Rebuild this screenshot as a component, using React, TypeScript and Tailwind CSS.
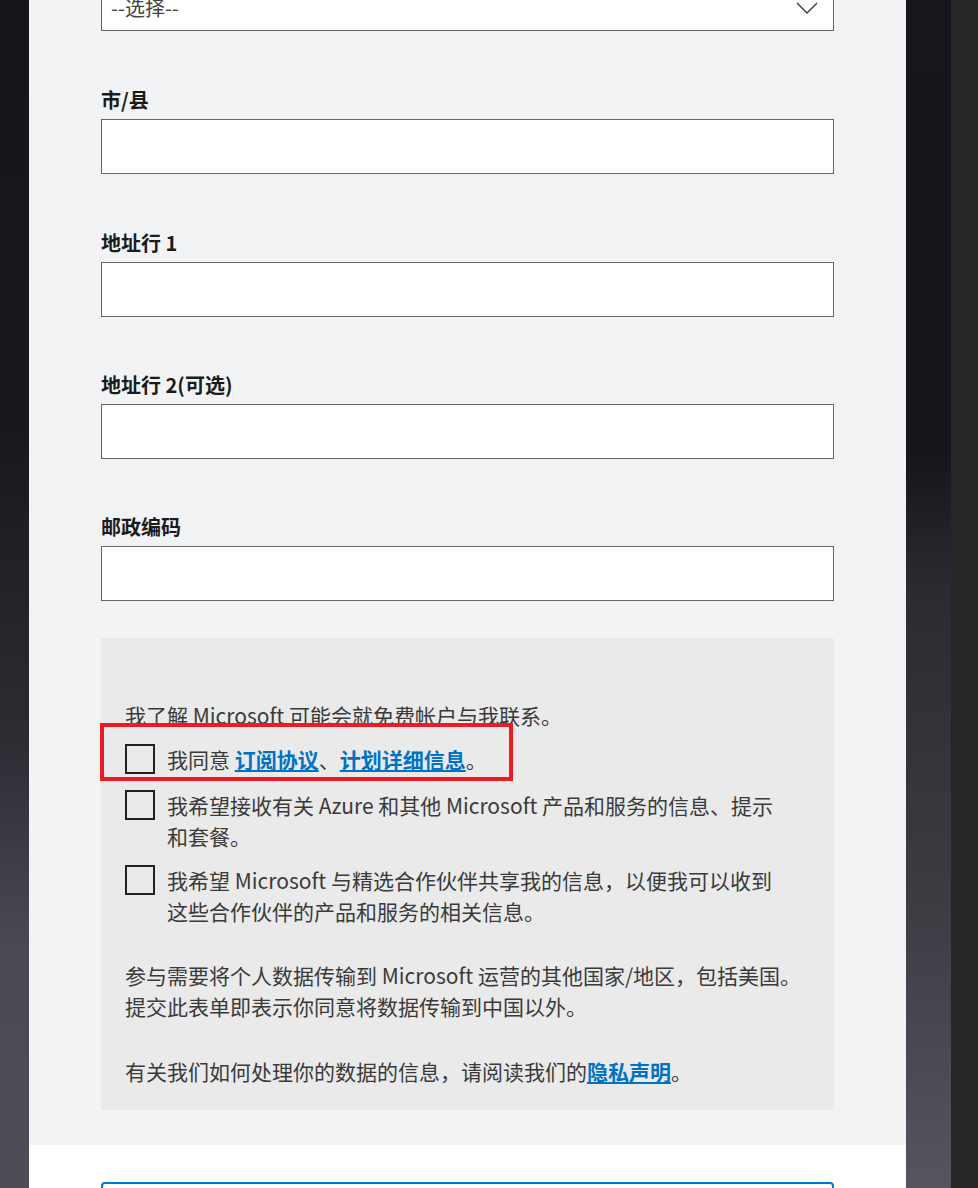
const font = "font-['Noto_Sans_CJK_SC','Noto_Sans',sans-serif]";

function Field({ label, first }: { label: string; first?: boolean }) {
  return (
    <div className={first ? "mt-[55px]" : "mt-[54px]"}>
      <div className="mb-[5px] text-[20px] font-bold leading-[28px] text-[#1b1b1b]">{label}</div>
      <div className="h-[55px] w-full border border-[#666] bg-white" />
    </div>
  );
}

function Checkbox({ children }: { children: React.ReactNode }) {
  return (
    <div className="flex items-start gap-[12px]">
      <div className="h-[30px] w-[30px] shrink-0 border-2 border-[#222]" />
      <div className="leading-[31px]">{children}</div>
    </div>
  );
}

function Link({ children }: { children: React.ReactNode }) {
  return <a className="font-bold text-[#0072c6] underline underline-offset-2">{children}</a>;
}

export default function App() {
  return (
    <div className={`flex h-[1188px] w-[978px] overflow-hidden ${font}`}>
      <div className="h-full w-[29px] shrink-0 bg-[linear-gradient(to_bottom,#15161b_0%,#17181d_35%,#2c2c33_62%,#4a4a55_80%,#4d4d58_100%)]" />

      <div className="flex w-[877px] shrink-0 flex-col">
        <div className="bg-[#f2f3f5] px-[72px] pb-[35px]">
          <div className="-mt-[24px] flex h-[55px] items-center justify-between border border-[#666] bg-white pl-[9px] pr-[15px] pt-[9px]">
            <span className="text-[20px] text-[#444]">--选择--</span>
            <svg width="22" height="12" viewBox="0 0 22 12" fill="none">
              <path d="M1 1 L11 11 L21 1" stroke="#333" strokeWidth="1.3" />
            </svg>
          </div>

          <Field label="市/县" first />
          <Field label="地址行 1" first />
          <Field label="地址行 2(可选)" />
          <Field label="邮政编码" />

          <div className="relative mt-[37px] bg-[#eaeaea] pb-[23px] pl-[24px] pr-[24px] pt-[62px] text-[21px] text-[#3a3a3a]">
            <p className="leading-[31px]">我了解 Microsoft 可能会就免费帐户与我联系。</p>
            <div className="mt-[13px]">
              <Checkbox>
                我同意 <Link>订阅协议</Link>、<Link>计划详细信息</Link>。
              </Checkbox>
            </div>
            <div className="mt-[15px]">
              <Checkbox>
                我希望接收有关 Azure 和其他 Microsoft 产品和服务的信息、提示
                <br />
                和套餐。
              </Checkbox>
            </div>
            <div className="mt-[13px]">
              <Checkbox>
                我希望 Microsoft 与精选合作伙伴共享我的信息，以便我可以收到
                <br />
                这些合作伙伴的产品和服务的相关信息。
              </Checkbox>
            </div>
            <p className="mt-[33px] leading-[31px]">
              参与需要将个人数据传输到 Microsoft 运营的其他国家/地区，包括美国。
              <br />
              提交此表单即表示你同意将数据传输到中国以外。
            </p>
            <p className="mt-[34px] leading-[31px]">
              有关我们如何处理你的数据的信息，请阅读我们的<Link>隐私声明</Link>。
            </p>

            <div className="absolute left-[-1px] top-[85px] h-[58px] w-[413px] border-4 border-[#ed1c24]" />
          </div>
        </div>

        <div className="flex-1 bg-white px-[72px] pt-[37px]">
          <div className="h-[60px] w-full rounded-[4px] border-2 border-[#0078d4]" />
        </div>
      </div>

      <div className="h-full w-[45px] shrink-0 bg-[linear-gradient(to_bottom,#16171c_0%,#15161b_38%,#2b2b32_50%,#3c3b42_75%,#55555f_100%)]" />
      <div className="h-full flex-1 bg-[#262626]" />
    </div>
  );
}
